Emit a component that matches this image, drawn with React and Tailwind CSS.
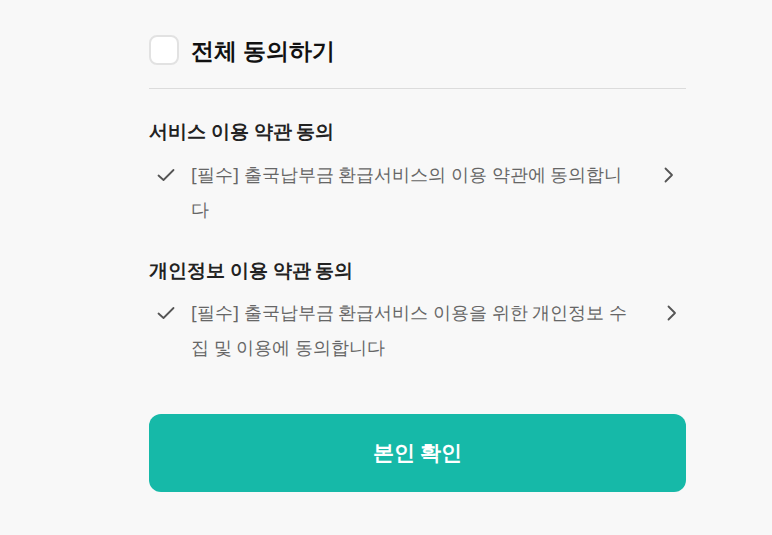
const Check = () => (
  <svg width="20" height="20" viewBox="0 0 20 20" fill="none" className="shrink-0">
    <path d="M2.5 10.5L7.5 15L17.5 5" stroke="#555" strokeWidth="1.8" strokeLinecap="round" strokeLinejoin="round" />
  </svg>
);

const Chevron = () => (
  <svg width="14" height="20" viewBox="0 0 14 20" fill="none" className="shrink-0">
    <path d="M3.5 3.5L10 10L3.5 16.5" stroke="#555" strokeWidth="1.8" strokeLinecap="round" strokeLinejoin="round" />
  </svg>
);

const TermRow = ({ text, wide }) => (
  <div className="flex flex-row items-start">
    <div className="w-[42px] pl-[7px] h-[35px] flex items-center">
      <Check />
    </div>
    <p className="w-[438px] text-[18px] leading-[35px] text-[#666]">{text}</p>
    <div className={wide ? "flex-1 h-[35px] flex items-center justify-end pr-[7px]" : "flex-1 h-[35px] flex items-center justify-end pr-[10px]"}>
      <Chevron />
    </div>
  </div>
);

const App = () => {
  return (
    <div className="w-full min-h-[535px] bg-[#f8f8f8] font-sans">
      <div className="w-[537px] ml-[149px] pt-[35px] flex flex-col">
        <div className="flex flex-row items-center gap-[12px] pb-[23px] border-b border-[#dcdcdc]">
          <div className="w-[30px] h-[30px] rounded-[8px] border-2 border-[#e2e2e2] bg-white" />
          <h1 className="text-[23px] leading-[30px] font-bold text-[#111]">전체 동의하기</h1>
        </div>

        <div className="mt-[28px] flex flex-col">
          <h2 className="text-[18.5px] font-bold text-[#222] leading-[28px]">서비스 이용 약관 동의</h2>
          <div className="mt-[12px]">
            <TermRow text="[필수] 출국납부금 환급서비스의 이용 약관에 동의합니다" />
          </div>
        </div>

        <div className="mt-[29px] flex flex-col">
          <h2 className="text-[18.5px] font-bold text-[#222] leading-[28px]">개인정보 이용 약관 동의</h2>
          <div className="mt-[11px]">
            <TermRow wide text="[필수] 출국납부금 환급서비스 이용을 위한 개인정보 수집 및 이용에 동의합니다" />
          </div>
        </div>

        <button className="mt-[49px] h-[78px] w-full rounded-[12px] bg-[#16b9a8] text-white text-[21px] font-bold">
          본인 확인
        </button>
      </div>
    </div>
  );
};

export default App;
